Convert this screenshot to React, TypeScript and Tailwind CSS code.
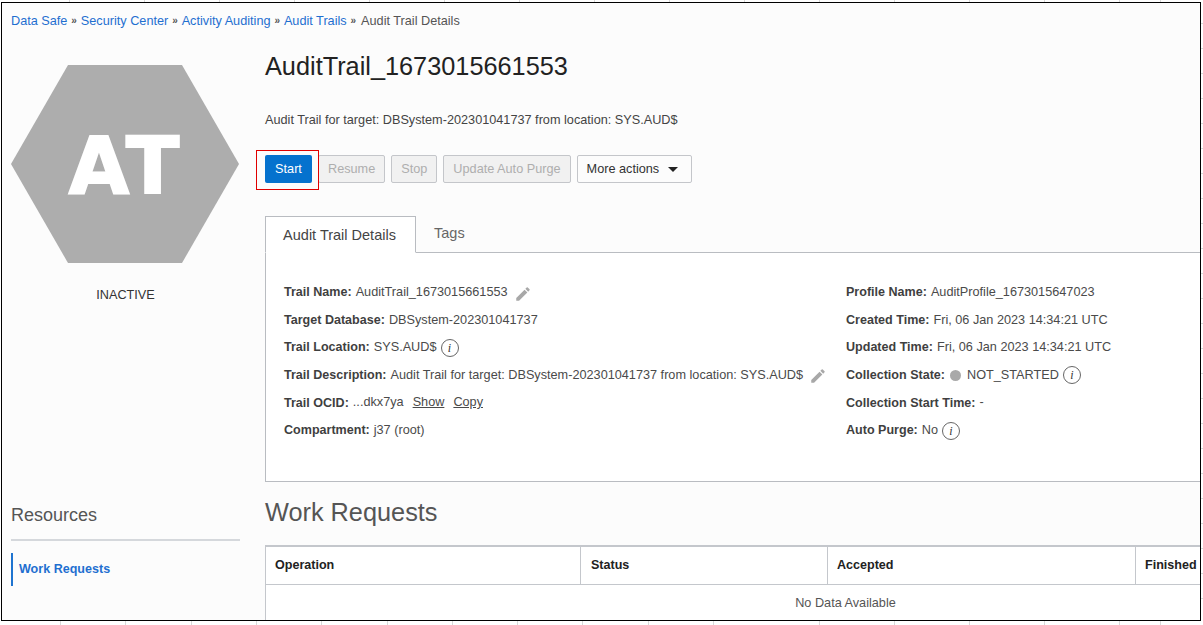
import { MdEdit } from 'react-icons/md'

const crumbs = ['Data Safe', 'Security Center', 'Activity Auditing', 'Audit Trails']
const topTicks = [69, 144, 219, 294, 369, 444, 519, 594, 669, 744, 819, 894, 969, 1044, 1119, 1160]
const bottomTicks = [60, 125, 191, 256, 321, 387, 452, 517, 582, 648, 713, 819, 894, 969, 1044, 1119, 1160]
const sideTicks = [23, 48, 73, 98, 123, 148, 173, 198, 223, 248, 273, 298, 323, 348, 373, 398, 423, 448, 473, 498, 523, 548, 573, 598]

function Info() {
  return (
    <span className="inline-flex items-center justify-center w-[18px] h-[18px] rounded-full border border-[#666] ml-[4px] align-middle font-['Liberation_Serif',serif] italic text-[12px] leading-none text-[#333]">
      i
    </span>
  )
}

function Pencil() {
  return <MdEdit className="inline-block ml-[6px] text-[#a8a8a8] w-[18px] h-[18px] shrink-0 translate-y-[1px]" />
}

function Row({ label, children }: { label: string; children: React.ReactNode }) {
  return (
    <div className="h-[27.6px] flex items-center whitespace-nowrap">
      <b className="font-bold text-[12.55px] text-[#3f3f3f] mr-[4px]">{label}</b>
      {children}
    </div>
  )
}

function DisabledButton({ children }: { children: React.ReactNode }) {
  return (
    <button className="h-[28px] px-[9px] pt-[1px] rounded-[2px] border border-[#c4c6ca] bg-[#f1f1f1] text-[#aeaeae]">
      {children}
    </button>
  )
}

export default function App() {
  return (
    <div className="relative w-[1203px] h-[625px] overflow-hidden bg-white font-['Liberation_Sans',sans-serif] text-[12.7px] text-[#4a4a4a]">
      {/* spreadsheet gridlines around the pasted screenshot */}
      {topTicks.map(x => <div key={x} className="absolute top-0 w-px h-[3px] bg-[#d9d9d9]" style={{ left: x }} />)}
      {bottomTicks.map(x => <div key={x} className="absolute bottom-0 w-px h-[5px] bg-[#d9d9d9]" style={{ left: x }} />)}
      {sideTicks.map(y => <div key={y} className="absolute right-0 w-[2px] h-px bg-[#d9d9d9]" style={{ top: y }} />)}

      <div className="absolute left-[1px] top-[2px] w-[1200px] h-[619px] border border-black bg-[#fcfcfc] overflow-hidden flex flex-col">
        <div className="h-[35px] pl-[9px] pt-[2px] flex items-center leading-none">
          {crumbs.map(c => (
            <span key={c} className="flex items-center">
              <span className="text-[#1f6fd0]">{c}</span>
              <span className="text-[#555] font-bold text-[10px] w-[13.4px] text-center">»</span>
            </span>
          ))}
          <span className="text-[#555] ml-[1px]">Audit Trail Details</span>
        </div>

        <div className="flex flex-1 min-h-0 pl-[9px]">
          <div className="w-[229px] shrink-0 flex flex-col">
            <div className="relative mt-[27px] h-[199px]">
              <svg width="229" height="199" viewBox="0 0 229 199">
                <polygon points="57,0 171,0 228,99 171,198 57,198 0,99" fill="#adadad" />
              </svg>
              <div className="absolute left-0 right-0 top-[51px] text-center font-['DejaVu_Sans',sans-serif] font-bold text-[78px] leading-[100px] tracking-[3px] text-white [-webkit-text-stroke:2px_#ffffff]">
                AT
              </div>
            </div>
            <div className="mt-[22px] text-center text-[#333]">INACTIVE</div>
            <div className="mt-[198px] text-[18px] leading-[24px] text-[#555]">Resources</div>
            <div className="mt-[12px] border-t-2 border-[#d5d8dc]" />
            <div className="mt-[12px] h-[33px] border-l-2 border-[#1f74d0] pl-[6px] flex items-center font-bold text-[12.55px] text-[#1f6fd0]">
              Work Requests
            </div>
          </div>

          <div className="ml-[25px] flex-1 min-w-0 flex flex-col">
            <h1 className="mt-[12px] text-[25.3px] leading-[32px] text-[#222]">AuditTrail_1673015661553</h1>
            <p className="mt-[30px] leading-[16px] text-[#444]">Audit Trail for target: DBSystem-202301041737 from location: SYS.AUD$</p>
            <div className="relative mt-[27px] flex gap-[6px]">
              <button className="h-[28px] w-[47px] pt-[1px] rounded-[2px] bg-[#0572ce] text-white">Start</button>
              <DisabledButton>Resume</DisabledButton>
              <DisabledButton>Stop</DisabledButton>
              <DisabledButton>Update Auto Purge</DisabledButton>
              <button className="h-[28px] pl-[9px] pr-[13px] pt-[1px] rounded-[2px] border border-[#c4c6ca] bg-[#fcfcfc] text-[#333] flex items-center">
                More actions
                <span className="ml-[9px] w-0 h-0 border-x-[5px] border-x-transparent border-t-[5px] border-t-[#222]" />
              </button>
              <div className="absolute left-[-9px] top-[-5px] w-[63px] h-[40px] border border-[#e00000]" />
            </div>

            <div className="mt-[33px] h-[37px] flex border-b border-[#b9bcc1] shrink-0">
              <div className="h-[37px] w-[151px] pt-[2px] pr-[2px] border border-[#b9bcc1] border-b-[#ffffff] bg-white flex items-center justify-center text-[14.5px] text-[#444]">
                Audit Trail Details
              </div>
              <div className="pl-[18px] pt-[2px] flex items-center h-[34px] text-[14.5px] text-[#666]">Tags</div>
            </div>
            <div className="h-[229px] shrink-0 border-l border-b border-[#b9bcc1] bg-white flex pt-[25.8px] pl-[18px] text-[#4a4a4a]">
              <div className="w-[562px] shrink-0">
                <Row label="Trail Name:">AuditTrail_1673015661553<Pencil /></Row>
                <Row label="Target Database:">DBSystem-202301041737</Row>
                <Row label="Trail Location:">SYS.AUD$<Info /></Row>
                <Row label="Trail Description:">Audit Trail for target: DBSystem-202301041737 from location: SYS.AUD$<Pencil /></Row>
                <Row label="Trail OCID:">
                  ...dkx7ya
                  <u className="ml-[9px]">Show</u>
                  <u className="ml-[9px]">Copy</u>
                </Row>
                <Row label="Compartment:">j37 (root)</Row>
              </div>
              <div>
                <Row label="Profile Name:">AuditProfile_1673015647023</Row>
                <Row label="Created Time:">Fri, 06 Jan 2023 14:34:21 UTC</Row>
                <Row label="Updated Time:">Fri, 06 Jan 2023 14:34:21 UTC</Row>
                <Row label="Collection State:">
                  <span className="w-[11px] h-[11px] rounded-full bg-[#a9a9a9] mr-[6px] ml-[1px]" />
                  NOT_STARTED<Info />
                </Row>
                <Row label="Collection Start Time:">-</Row>
                <Row label="Auto Purge:">No<Info /></Row>
              </div>
            </div>

            <h2 className="mt-[13px] text-[25.3px] leading-[34px] text-[#555]">Work Requests</h2>
            <div className="mt-[16px] w-[1160px] flex-1 border-l border-t-2 border-[#c4c7cc] bg-white">
              <div className="h-[38px] flex border-b border-[#c4c7cc] font-bold text-[12.55px] text-[#222]">
                <div className="w-[315px] shrink-0 border-r border-[#c4c7cc] pl-[9px] flex items-center">Operation</div>
                <div className="w-[247px] shrink-0 border-r border-[#c4c7cc] pl-[10px] flex items-center">Status</div>
                <div className="w-[308px] shrink-0 border-r border-[#c4c7cc] pl-[9px] flex items-center">Accepted</div>
                <div className="pl-[9px] flex items-center">Finished</div>
              </div>
              <div className="h-[38px] flex items-center justify-center text-[#555]">No Data Available</div>
            </div>
          </div>
        </div>
      </div>
    </div>
  )
}
